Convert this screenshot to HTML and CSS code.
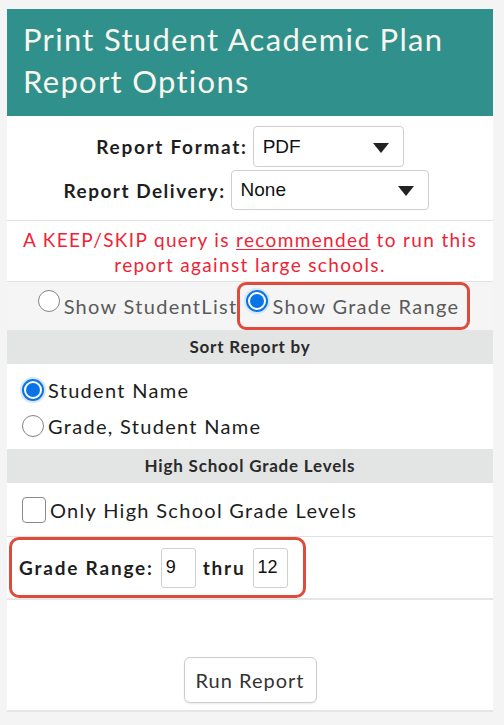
FILE: index.html
```html
<!DOCTYPE html>
<html>
<head>
<meta charset="utf-8">
<link rel="stylesheet" href="styles.css">
</head>
<body>
<div class="panel">
  <div class="header">Print Student Academic Plan Report Options</div>

  <div class="section formats">
    <div class="frow">
      <label class="flabel">Report Format:</label>
      <div class="sel sel-format"><span class="sel-text">PDF</span><span class="caret"></span></div>
    </div>
    <div class="frow">
      <label class="flabel">Report Delivery:</label>
      <div class="sel sel-delivery"><span class="sel-text">None</span><span class="caret"></span></div>
    </div>
  </div>

  <div class="section warning">A KEEP/SKIP query is <u>recommended</u> to run this report against large schools.</div>

  <div class="section showrow">
    <label class="opt gray"><span class="radio"></span>Show StudentList</label>
    <label class="opt gray boxed"><span class="radio on"></span>Show Grade Range</label>
  </div>

  <div class="subhead">Sort Report by</div>
  <div class="section sortopts">
    <label class="opt"><span class="radio on"></span>Student Name</label>
    <label class="opt"><span class="radio"></span>Grade, Student Name</label>
  </div>

  <div class="subhead">High School Grade Levels</div>
  <div class="section checkrow">
    <label class="opt"><span class="check"></span>Only High School Grade Levels</label>
  </div>

  <div class="section graderow">
    <div class="rangebox">
      <span class="blabel">Grade Range:</span>
      <span class="num">9</span>
      <span class="blabel">thru</span>
      <span class="num">12</span>
    </div>
  </div>

  <div class="section actions">
    <button class="run">Run Report</button>
  </div>
</div>
</body>
</html>
```

FILE: styles.css
```css
* { box-sizing: border-box; }
html, body { margin: 0; padding: 0; }
body {
  background: #f4f4f4;
  font-family: Lato, "Noto Sans", sans-serif;
  color: #222;
}
.panel {
  margin: 9px 0 0 7px;
  width: 486px;
  background: #fff;
  border-bottom: 2px solid #e6e6e6;
}
.header {
  background: #30908b;
  color: #f7f6ee;
  font-size: 31px;
  line-height: 42px;
  padding: 9px 14px 12px 16px;
  height: 107px;
  letter-spacing: 1.3px;
}
.section { border-bottom: 1px solid #e2e2e2; }
.formats {
  display: flex;
  flex-direction: column;
  align-items: center;
  gap: 3px;
  padding: 10px 0 10px 0;
  height: 105px;
}
.frow { display: flex; align-items: center; gap: 5px; }
.frow:last-child { margin-right: 8px; }
.flabel { font-weight: bold; font-size: 19px; color: #1e1e1e; letter-spacing: 1.7px; }
.frow:last-child .flabel { letter-spacing: 1.5px; }
.sel {
  position: relative;
  height: 41px;
  border: 1px solid #cfcfcf;
  border-radius: 4px;
  background: #fff;
  display: flex;
  align-items: center;
  padding-left: 9px;
  font-family: "Liberation Sans", Arial, sans-serif;
  font-size: 19px;
  color: #111;
}
.sel-format { width: 151px; }
.sel-delivery { width: 198px; height: 40px; }
.caret {
  position: absolute;
  right: 14px;
  top: 50%;
  margin-top: -4px;
  width: 0; height: 0;
  border-left: 8px solid transparent;
  border-right: 8px solid transparent;
  border-top: 10px solid #222;
}
.warning {
  color: #f02336;
  font-size: 19px;
  line-height: 25px;
  letter-spacing: 1.35px;
  text-align: center;
  padding: 6px 4px 6px;
  height: 61px;
}
.warning u { text-decoration-thickness: 1px; text-underline-offset: 2px; }
.showrow {
  background: #f5f5f5;
  display: flex;
  justify-content: center;
  align-items: center;
  height: 48px;
  border-bottom: none;
  padding-left: 8px;
}
.opt {
  display: flex;
  align-items: center;
  font-size: 20px;
  letter-spacing: 1.3px;
  color: #1d1d1d;
}
.opt.gray { color: #5a5a5a; }
.boxed {
  border: 3px solid #e04a3a;
  border-radius: 9px;
  height: 48px;
  padding: 0 8px 0 6px;
}
.radio {
  width: 22px;
  height: 22px;
  border-radius: 50%;
  border: 1.5px solid #858585;
  background: #fff;
  margin-right: 4px;
  flex: none;
  position: relative;
}
.radio.on {
  border: 2px solid #0a74e6;
  box-shadow: 0 0 0 2px #d5e6fb;
}
.radio.on::after {
  content: "";
  position: absolute;
  left: 2px; top: 2px;
  width: 14px; height: 14px;
  border-radius: 50%;
  background: #0a74e6;
}
.showrow .radio { margin-top: -10px; }
.subhead {
  background: #e3e4e4;
  text-align: center;
  font-weight: bold;
  font-size: 17px;
  letter-spacing: 0.8px;
  color: #2a2a2a;
  height: 34px;
  line-height: 34px;
}
.sortopts {
  padding: 14px 0 0 15px;
  height: 85px;
  display: flex;
  flex-direction: column;
  gap: 12px;
  border-bottom: none;
}
.checkrow {
  height: 54px;
  display: flex;
  align-items: center;
  padding-left: 15px;
}
.check {
  width: 24px;
  height: 26px;
  border: 1.5px solid #8a8a8a;
  border-radius: 4px;
  margin-right: 4px;
  background: #fff;
}
.graderow {
  height: 63px;
  padding-left: 2px;
  display: flex;
  align-items: center;
  border-bottom: 2px solid #e6e6e6;
}
.rangebox {
  display: flex;
  align-items: center;
  gap: 7px;
  border: 3px solid #e04a3a;
  border-radius: 10px;
  width: 297px;
  height: 61px;
  padding-left: 7px;
}
.blabel { font-weight: bold; font-size: 19px; color: #1e1e1e; letter-spacing: 1.8px; }
.num {
  width: 35px;
  height: 40px;
  border: 1px solid #d0d0d0;
  border-radius: 3px;
  font-family: "Liberation Sans", Arial, sans-serif;
  font-size: 18px;
  display: flex;
  align-items: center;
  padding-left: 4px;
  color: #111;
}
.actions {
  height: 110px;
  display: flex;
  justify-content: center;
  align-items: flex-end;
  padding-bottom: 7px;
  border-bottom: none;
}
.run {
  width: 133px;
  height: 46px;
  background: #fff;
  border: 1px solid #cdcdcd;
  border-radius: 6px;
  font-family: Lato, "Noto Sans", sans-serif;
  font-size: 20px;
  letter-spacing: 1px;
  color: #333;
  box-shadow: 0 1px 2px rgba(0,0,0,0.08);
}
```
